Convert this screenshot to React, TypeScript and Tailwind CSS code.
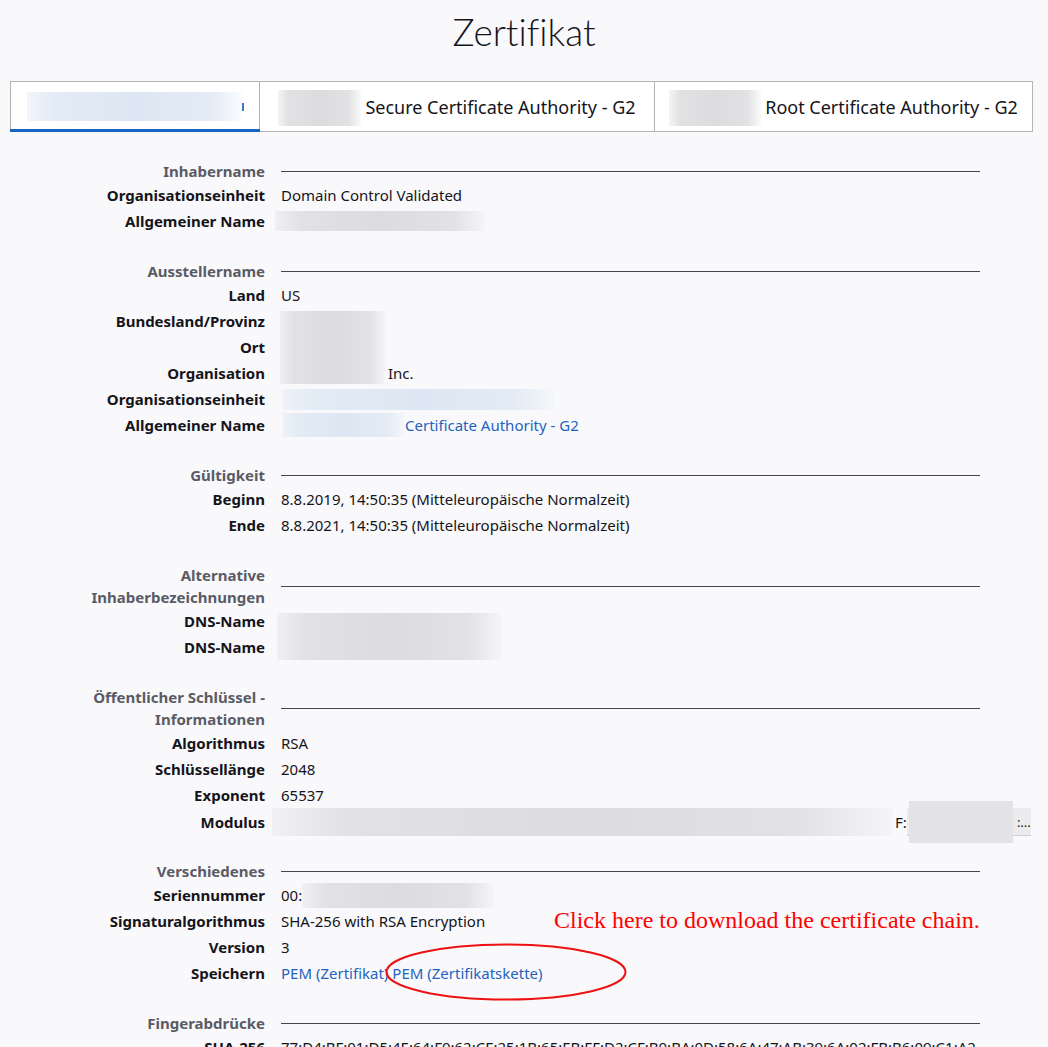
import React from "react";

const GRAY_BLUR =
  "bg-[linear-gradient(to_right,rgba(220,220,222,0.3),#e2e2e4_12%,#dcdcde_50%,#e2e2e4_85%,rgba(230,230,232,0.2))]";
const BLUE_BLUR =
  "bg-[linear-gradient(to_right,rgba(222,232,244,0.4),#e3ebf5_12%,#dde7f3_50%,#e3ebf5_85%,rgba(230,238,248,0.2))]";

function Title({ children }: { children: React.ReactNode }) {
  return (
    <div className="grid grid-cols-[255px_1fr] gap-x-4">
      <div className="text-right font-bold text-[15px] leading-[22px] text-[#5b5b66]">
        {children}
      </div>
      <div className="flex items-center">
        <div className="h-px w-[699px] bg-[#45454c]" />
      </div>
    </div>
  );
}

function Row({
  label,
  children,
}: {
  label: string;
  children?: React.ReactNode;
}) {
  return (
    <div className="grid grid-cols-[255px_1fr] gap-x-4 h-[26px] items-center">
      <div className="text-right font-bold text-[15px] leading-[22px] text-[#15141a]">
        {label}
      </div>
      <div className="relative flex items-center text-[15px] leading-[22px] text-[#15141a] whitespace-nowrap">
        {children}
      </div>
    </div>
  );
}

function Section({ children }: { children: React.ReactNode }) {
  return <div className="mb-[26px]">{children}</div>;
}

export default function App() {
  return (
    <div
      className="relative min-h-screen bg-[#f9f9fb] px-[10px] text-[#15141a]"
      style={{ fontFamily: '"Noto Sans", "Open Sans", sans-serif' }}
    >
      <h1
        className="text-center text-[37px] font-light leading-[64px] text-[#15141a] pt-0 [font-variant-ligatures:none]"
        style={{ fontFamily: 'Lato, "Noto Sans", sans-serif', fontWeight: 300 }}
      >
        Zertifikat
      </h1>

      {/* Tabs */}
      <div className="mt-[17px] flex h-[51px] w-[1023px]">
        <div className="relative flex w-[250px] items-center justify-center border border-[#b4b4b6] bg-white">
          <div className={`h-[29px] w-[215px] ${BLUE_BLUR}`} />
          <div className="h-[8px] w-[2px] bg-[#3d78c4]" />
          <div className="absolute bottom-[-1px] left-[-1px] right-[-1px] h-[3px] bg-[#1a62c4]" />
        </div>
        <div className="flex w-[395px] items-center justify-center border border-l-0 border-[#b4b4b6] bg-white pt-[2px] text-[18px]">
          <div className={`mr-[4px] h-[36px] w-[83px] ${GRAY_BLUR}`} />
          <span>Secure Certificate Authority - G2</span>
        </div>
        <div className="flex w-[378px] items-center justify-center border border-l-0 border-[#b4b4b6] bg-white pt-[2px] text-[18px]">
          <div className={`mr-[4px] h-[36px] w-[92px] ${GRAY_BLUR}`} />
          <span>Root Certificate Authority - G2</span>
        </div>
      </div>

      <div className="mt-[28px]">
        <Section>
          <Title>Inhabername</Title>
          <Row label="Organisationseinheit">Domain Control Validated</Row>
          <Row label="Allgemeiner Name">
            <div className={`-ml-[6px] h-[20px] w-[210px] ${GRAY_BLUR}`} />
          </Row>
        </Section>

        <Section>
          <Title>Ausstellername</Title>
          <Row label="Land">US</Row>
          <Row label="Bundesland/Provinz">
            <div
              className={`absolute left-[-1px] top-[-10px] h-[73px] w-[105px] ${GRAY_BLUR}`}
            />
          </Row>
          <Row label="Ort" />
          <Row label="Organisation">
            <span className="ml-[107px]">Inc.</span>
          </Row>
          <Row label="Organisationseinheit">
            <div className={`ml-[2px] h-[21px] w-[272px] ${BLUE_BLUR}`} />
          </Row>
          <Row label="Allgemeiner Name">
            <div className={`ml-[2px] h-[24px] w-[122px] ${BLUE_BLUR}`} />
            <a className="text-[#1f62c0]">Certificate Authority - G2</a>
          </Row>
        </Section>

        <Section>
          <Title>Gültigkeit</Title>
          <Row label="Beginn">8.8.2019, 14:50:35 (Mitteleuropäische Normalzeit)</Row>
          <Row label="Ende">8.8.2021, 14:50:35 (Mitteleuropäische Normalzeit)</Row>
        </Section>

        <Section>
          <Title>
            Alternative
            <br />
            Inhaberbezeichnungen
          </Title>
          <Row label="DNS-Name">
            <div
              className={`absolute left-[-4px] top-[-8px] h-[47px] w-[225px] ${GRAY_BLUR}`}
            />
          </Row>
          <Row label="DNS-Name" />
        </Section>

        <Section>
          <Title>
            Öffentlicher Schlüssel -
            <br />
            Informationen
          </Title>
          <Row label="Algorithmus">RSA</Row>
          <Row label="Schlüssellänge">2048</Row>
          <Row label="Exponent">65537</Row>
          <Row label="Modulus">
            <div className={`-ml-[9px] h-[28px] w-[621px] ${GRAY_BLUR}`} />
            <span className="ml-[2px]">F:</span>
            <div className="relative h-[28px] w-[124px] border-b border-[#cfcfd3] bg-[#ececee]">
              <div className="absolute left-[2px] top-[-7px] h-[42px] w-[104px] bg-[#e3e3e5]" />
              <span className="absolute right-[0px] top-[3px] text-[13px]">:...</span>
            </div>
          </Row>
        </Section>

        <Section>
          <Title>Verschiedenes</Title>
          <Row label="Seriennummer">
            <span>00:</span>
            <div className={`h-[25px] w-[192px] ${GRAY_BLUR}`} />
          </Row>
          <Row label="Signaturalgorithmus">SHA-256 with RSA Encryption</Row>
          <Row label="Version">3</Row>
          <Row label="Speichern">
            <a className="text-[#1f62c0]">PEM (Zertifikat)</a>
            <a className="ml-[4px] text-[#1f62c0]">PEM (Zertifikatskette)</a>
          </Row>
        </Section>

        <Section>
          <Title>Fingerabdrücke</Title>
          <Row label="SHA-256">
            77:D4:BF:01:D5:4E:64:F0:62:CE:25:1B:65:EB:FF:D2:CF:B0:BA:0D:58:6A:47:AB:39:6A:02:FB:B6:09:C1:A2
          </Row>
          <Row label="SHA-1">
            3A:1F:0C:92:B4:7E:55:D1:08:6B:C3:29:E4:F7:12:9A:BD:60:44:8E
          </Row>
        </Section>
      </div>

      {/* Annotation overlay */}
      <div
        className="pointer-events-none absolute left-[554px] top-[903px] text-[24px] leading-[34px] text-[#ff0000] whitespace-nowrap"
        style={{ fontFamily: '"Liberation Serif", "Times New Roman", serif' }}
      >
        Click here to download the certificate chain.
      </div>
      <svg
        className="pointer-events-none absolute left-[384px] top-[942px]"
        width="244"
        height="60"
        viewBox="0 0 244 60"
      >
        <ellipse cx="122" cy="30" rx="119.5" ry="27.5" fill="none" stroke="#ee1111" strokeWidth="2" />
      </svg>
    </div>
  );
}
